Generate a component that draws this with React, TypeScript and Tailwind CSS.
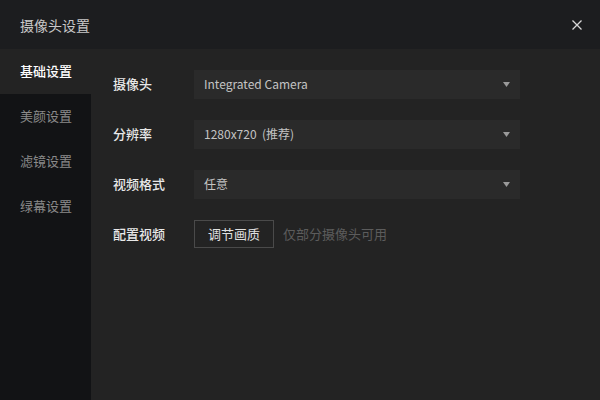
const rows = [
  { label: "摄像头", value: "Integrated Camera" },
  { label: "分辨率", value: "1280x720  (推荐)" },
  { label: "视频格式", value: "任意" },
];

const tabs = ["基础设置", "美颜设置", "滤镜设置", "绿幕设置"];

function Caret() {
  return (
    <svg width="7" height="5" viewBox="0 0 7 5" className="shrink-0">
      <path d="M0 0H7L3.5 5Z" fill="#9a9a9a" />
    </svg>
  );
}

export default function App() {
  return (
    <div
      className="flex h-[400px] w-[600px] flex-col bg-[#232323] text-[13px] leading-none"
      style={{ fontFamily: '"Noto Sans CJK SC", "Liberation Sans", sans-serif' }}
    >
      {/* 标题栏 */}
      <div className="flex h-[49px] shrink-0 items-center justify-between bg-[#1c1d1f] pl-5 pr-[18px]">
        <span className="text-[14px] text-[#c8c8c8]">摄像头设置</span>
        <svg width="10" height="10" viewBox="0 0 10 10">
          <path d="M0.5 0.5L9.5 9.5M9.5 0.5L0.5 9.5" stroke="#d8d8d8" strokeWidth="1.3" />
        </svg>
      </div>

      <div className="flex flex-1">
        {/* 侧边栏 */}
        <div className="flex w-[91px] shrink-0 flex-col bg-[#121315]">
          {tabs.map((t, i) => (
            <div
              key={t}
              className={
                i === 0
                  ? "flex h-[45px] items-center bg-[#232323] pb-[3px] pl-5 font-medium text-white"
                  : "flex h-[45px] items-center pb-[3px] pl-5 text-[#8a8a8a]"
              }
            >
              {t}
            </div>
          ))}
        </div>

        {/* 内容 */}
        <div className="flex flex-1 flex-col gap-[21px] pl-[22px] pt-[21px]">
          {rows.map((r) => (
            <div key={r.label} className="flex items-center">
              <span className="w-[81px] pb-[2px] font-medium text-[#e8e8e8]">{r.label}</span>
              <div className="flex h-[29px] w-[326px] items-center justify-between bg-[#2a2a2a] pl-[10px] pr-[10px]">
                <span className="whitespace-pre pb-[2px] text-[12px] text-[#c4c4c4]">{r.value}</span>
                <Caret />
              </div>
            </div>
          ))}

          <div className="flex items-center">
            <span className="w-[81px] pb-[2px] font-medium text-[#e8e8e8]">配置视频</span>
            <button className="h-[28px] w-[80px] border border-[#4a4a4a] pb-[2px] text-[#e0e0e0]">
              调节画质
            </button>
            <span className="ml-[9px] pb-[2px] text-[#5c5c5c]">仅部分摄像头可用</span>
          </div>
        </div>
      </div>
    </div>
  );
}
